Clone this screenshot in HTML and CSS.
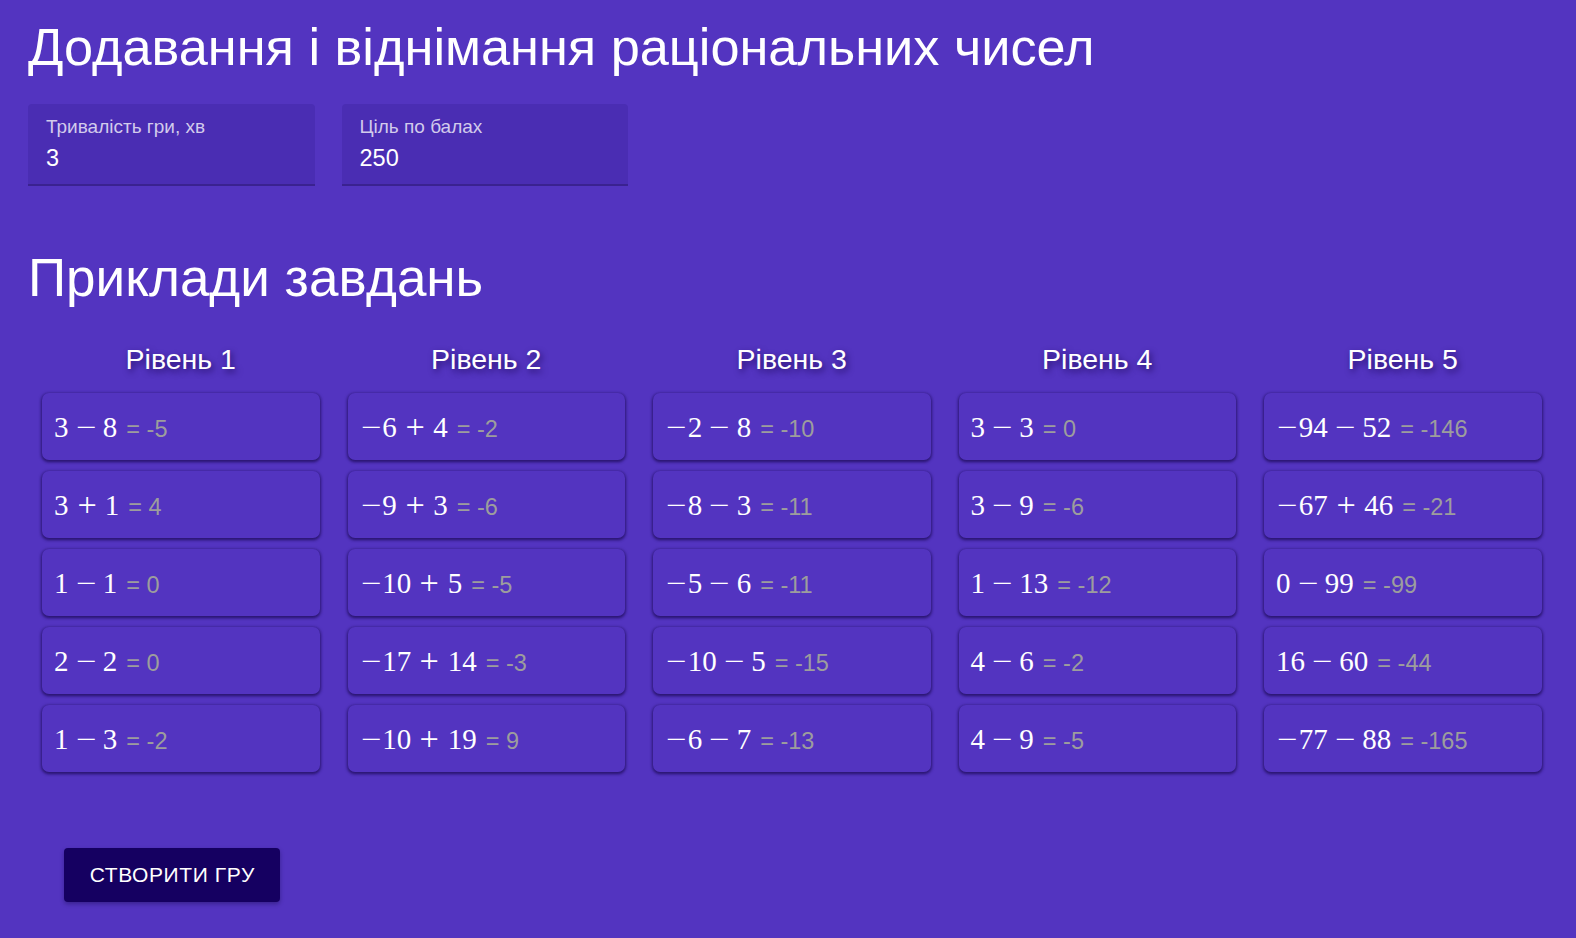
FILE: index.html
```html
<!DOCTYPE html>
<html lang="uk">
<head>
<meta charset="utf-8">
<title>Додавання і віднімання раціональних чисел</title>
<link rel="stylesheet" href="styles.css">
</head>
<body>
<main class="page">
  <h1 class="title">Додавання і віднімання раціональних чисел</h1>
  <div class="fields">
    <div class="field">
      <div class="field-label">Тривалість гри, хв</div>
      <div class="field-value">3</div>
    </div>
    <div class="field">
      <div class="field-label">Ціль по балах</div>
      <div class="field-value">250</div>
    </div>
  </div>
  <h2 class="subtitle">Приклади завдань</h2>
  <div class="levels">
    <section class="level">
      <h3 class="level-title">Рівень 1</h3>
      <div class="card"><span class="expr">3<span class="op minus">−</span>8</span><span class="ans">= -5</span></div>
      <div class="card"><span class="expr">3<span class="op plus">+</span>1</span><span class="ans">= 4</span></div>
      <div class="card"><span class="expr">1<span class="op minus">−</span>1</span><span class="ans">= 0</span></div>
      <div class="card"><span class="expr">2<span class="op minus">−</span>2</span><span class="ans">= 0</span></div>
      <div class="card"><span class="expr">1<span class="op minus">−</span>3</span><span class="ans">= -2</span></div>
    </section>
    <section class="level">
      <h3 class="level-title">Рівень 2</h3>
      <div class="card"><span class="expr"><span class="neg">−</span>6<span class="op plus">+</span>4</span><span class="ans">= -2</span></div>
      <div class="card"><span class="expr"><span class="neg">−</span>9<span class="op plus">+</span>3</span><span class="ans">= -6</span></div>
      <div class="card"><span class="expr"><span class="neg">−</span>10<span class="op plus">+</span>5</span><span class="ans">= -5</span></div>
      <div class="card"><span class="expr"><span class="neg">−</span>17<span class="op plus">+</span>14</span><span class="ans">= -3</span></div>
      <div class="card"><span class="expr"><span class="neg">−</span>10<span class="op plus">+</span>19</span><span class="ans">= 9</span></div>
    </section>
    <section class="level">
      <h3 class="level-title">Рівень 3</h3>
      <div class="card"><span class="expr"><span class="neg">−</span>2<span class="op minus">−</span>8</span><span class="ans">= -10</span></div>
      <div class="card"><span class="expr"><span class="neg">−</span>8<span class="op minus">−</span>3</span><span class="ans">= -11</span></div>
      <div class="card"><span class="expr"><span class="neg">−</span>5<span class="op minus">−</span>6</span><span class="ans">= -11</span></div>
      <div class="card"><span class="expr"><span class="neg">−</span>10<span class="op minus">−</span>5</span><span class="ans">= -15</span></div>
      <div class="card"><span class="expr"><span class="neg">−</span>6<span class="op minus">−</span>7</span><span class="ans">= -13</span></div>
    </section>
    <section class="level">
      <h3 class="level-title">Рівень 4</h3>
      <div class="card"><span class="expr">3<span class="op minus">−</span>3</span><span class="ans">= 0</span></div>
      <div class="card"><span class="expr">3<span class="op minus">−</span>9</span><span class="ans">= -6</span></div>
      <div class="card"><span class="expr">1<span class="op minus">−</span>13</span><span class="ans">= -12</span></div>
      <div class="card"><span class="expr">4<span class="op minus">−</span>6</span><span class="ans">= -2</span></div>
      <div class="card"><span class="expr">4<span class="op minus">−</span>9</span><span class="ans">= -5</span></div>
    </section>
    <section class="level">
      <h3 class="level-title">Рівень 5</h3>
      <div class="card"><span class="expr"><span class="neg">−</span>94<span class="op minus">−</span>52</span><span class="ans">= -146</span></div>
      <div class="card"><span class="expr"><span class="neg">−</span>67<span class="op plus">+</span>46</span><span class="ans">= -21</span></div>
      <div class="card"><span class="expr">0<span class="op minus">−</span>99</span><span class="ans">= -99</span></div>
      <div class="card"><span class="expr">16<span class="op minus">−</span>60</span><span class="ans">= -44</span></div>
      <div class="card"><span class="expr"><span class="neg">−</span>77<span class="op minus">−</span>88</span><span class="ans">= -165</span></div>
    </section>
  </div>
  <div class="actions">
    <button class="btn" type="button">Створити гру</button>
  </div>
</main>
</body>
</html>
```

FILE: styles.css
```css
html, body {
  margin: 0;
  padding: 0;
  background: #5334c0;
  color: #ffffff;
  font-family: "Liberation Sans", Arial, sans-serif;
}
.page {
  padding: 17px 0 40px 28px;
}
.title {
  margin: 0;
  font-size: 52.3px;
  font-weight: 400;
  line-height: 60px;
  white-space: nowrap;
}
.fields {
  display: flex;
  gap: 27px;
  margin-top: 26.5px;
}
.field {
  width: 286.5px;
  height: 82.5px;
  box-sizing: border-box;
  background: #4a2db3;
  border-radius: 4px 4px 0 0;
  border-bottom: 2px solid #3a2290;
  padding: 12.3px 18px 0;
}
.field-label {
  font-size: 19px;
  line-height: 22px;
  color: #d2cbec;
}
.field-value {
  margin-top: 7px;
  font-size: 23.5px;
  line-height: 26px;
  color: #ffffff;
}
.subtitle {
  margin: 62px 0 0;
  font-size: 53px;
  font-weight: 400;
  line-height: 60px;
  white-space: nowrap;
}
.levels {
  display: grid;
  grid-template-columns: repeat(5, 305.5px);
  margin-top: 33.8px;
}
.level {
  display: flex;
  flex-direction: column;
  gap: 10.5px;
  padding: 0 14px;
}
.level-title {
  margin: 0 0 6.6px;
  text-align: center;
  font-size: 28.5px;
  font-weight: 400;
  line-height: 34px;
  text-shadow: 2px 3px 6px rgba(25, 5, 80, 0.75);
}
.card {
  height: 67.5px;
  box-sizing: border-box;
  border-radius: 7px;
  background: #5334c0;
  box-shadow: 0 1px 3px 1px rgba(25, 10, 80, 0.55), 0 2px 3px rgba(25, 10, 80, 0.35);
  display: flex;
  align-items: baseline;
  padding: 16.4px 12px 0;
}
.expr {
  font-family: "Liberation Serif", "Times New Roman", serif;
  font-size: 29px;
  line-height: 36px;
  color: #ffffff;
  white-space: nowrap;
}
.op,
.neg {
  display: inline-block;
}
.minus,
.neg {
  transform: scaleX(1.25);
}
.neg {
  margin: 0 3.5px 0 3px;
}
.minus {
  margin: 0 9px;
}
.plus {
  margin: 0 10px;
  transform: translateY(-1px) scale(1.18);
}
.ans {
  margin-left: 9px;
  font-size: 23.5px;
  color: #9d9d9d;
  white-space: nowrap;
}
.actions {
  margin-top: 75.8px;
  padding-left: 36.3px;
}
.btn {
  width: 216px;
  height: 54.3px;
  border: 0;
  border-radius: 4px;
  background: #150061;
  color: #ffffff;
  font-family: "Liberation Sans", Arial, sans-serif;
  font-size: 21px;
  letter-spacing: 0.6px;
  text-transform: uppercase;
  box-shadow: 0 2px 4px rgba(10, 0, 50, 0.35);
}
```
